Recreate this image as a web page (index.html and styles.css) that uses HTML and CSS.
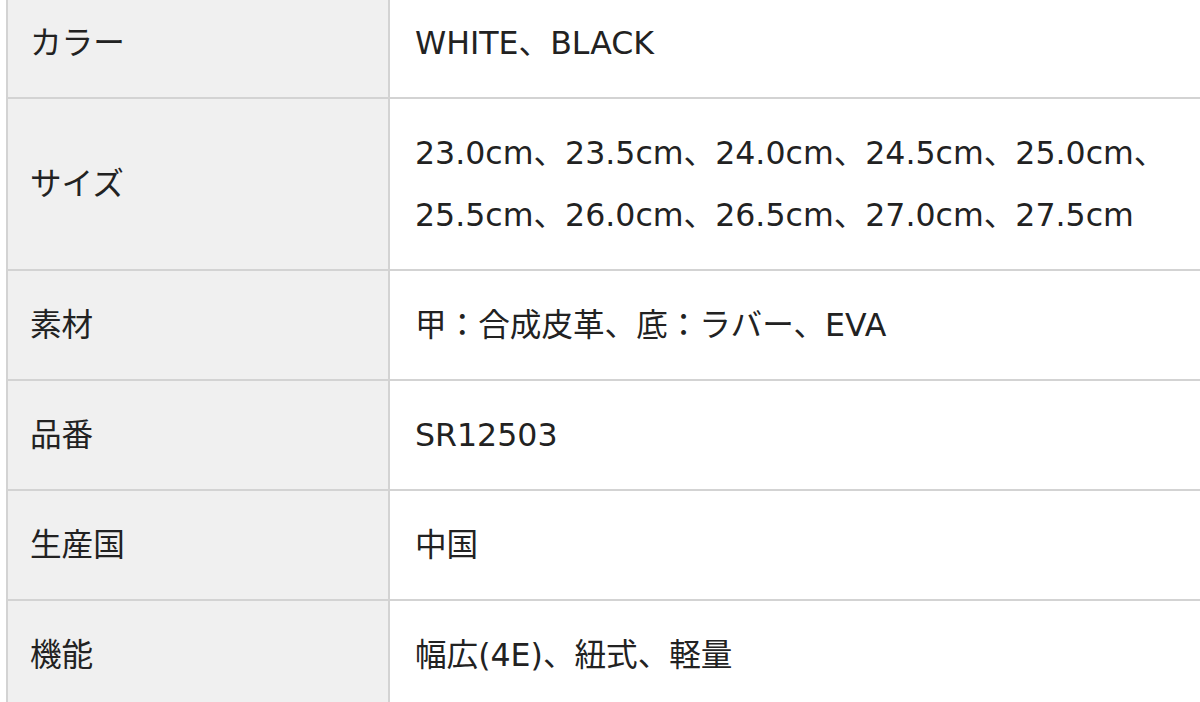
FILE: index.html
```html
<!DOCTYPE html>
<html lang="ja">
<head>
<meta charset="utf-8">
<link rel="stylesheet" href="styles.css">
</head>
<body>
<table class="spec">
  <tr><th>カラー</th><td>WHITE、BLACK</td></tr>
  <tr><th>サイズ</th><td>23.0cm、23.5cm、24.0cm、24.5cm、25.0cm、<br>25.5cm、26.0cm、26.5cm、27.0cm、27.5cm</td></tr>
  <tr><th>素材</th><td>甲：合成皮革、底：ラバー、EVA</td></tr>
  <tr><th>品番</th><td>SR12503</td></tr>
  <tr><th>生産国</th><td>中国</td></tr>
  <tr><th>機能</th><td>幅広(4E)、紐式、軽量</td></tr>
</table>
</body>
</html>
```

FILE: styles.css
```css
html, body {
  margin: 0;
  padding: 0;
  background: #ffffff;
  overflow: hidden;
}
body {
  width: 1200px;
  height: 702px;
}
.spec {
  border-collapse: collapse;
  margin: -13px 0 0 6px;
  width: 1194px;
  font-family: "DejaVu Sans", "Noto Sans CJK JP", sans-serif;
  font-size: 31.6px;
  line-height: 62px;
  color: #222222;
}
.spec th,
.spec td {
  border: 2px solid #d3d3d3;
  padding: 23px 24px;
  text-align: left;
  vertical-align: middle;
  font-weight: normal;
}
.spec th {
  width: 334px;
  background: #f0f0f0;
  padding-left: 22px;
}
.spec td {
  background: #ffffff;
  padding-left: 25px;
  padding-right: 0;
  border-right: none;
  white-space: nowrap;
}
```
